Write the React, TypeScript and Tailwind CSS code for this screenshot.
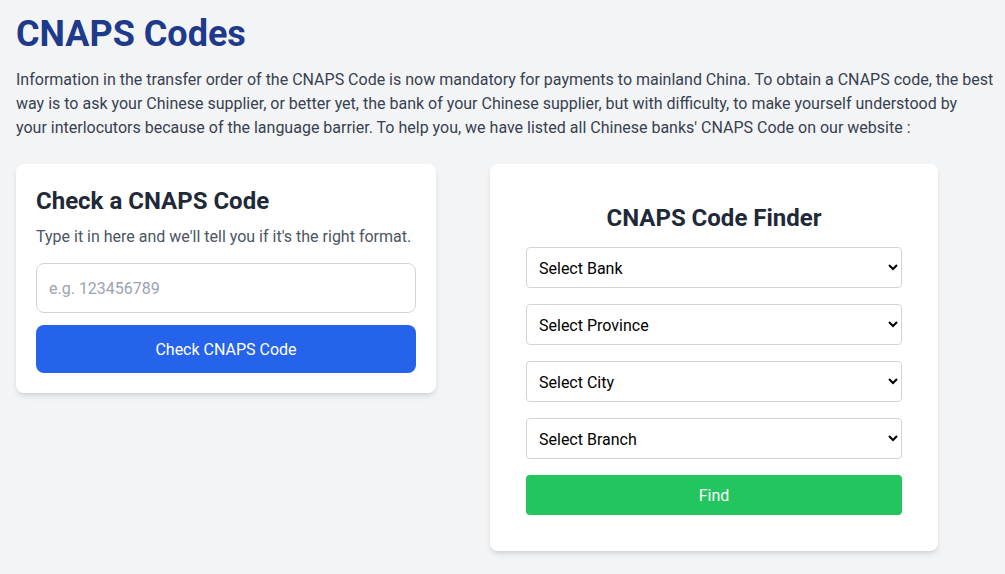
export default function App() {
  return (
    <div className="min-h-screen bg-[#f3f4f6] pl-4 pr-1 pt-[14px] pb-6 text-[#374151]" style={{ fontFamily: "Roboto, 'Noto Sans', sans-serif" }}>
      <h1 className="text-4xl font-bold text-[#1e3a8a]">CNAPS Codes</h1>
      <p className="mt-[14px] text-base leading-6 text-[#374151]">
        Information in the transfer order of the CNAPS Code is now mandatory for payments to mainland China. To obtain a CNAPS code, the best
        <br />
        way is to ask your Chinese supplier, or better yet, the bank of your Chinese supplier, but with difficulty, to make yourself understood by
        <br />
        your interlocutors because of the language barrier. To help you, we have listed all Chinese banks' CNAPS Code on our website :
      </p>

      <div className="mt-6 flex items-start gap-[54px]">
        {/* Check card */}
        <div className="w-[420px] rounded-lg bg-white px-5 pt-[21px] pb-5 shadow-md">
          <h2 className="text-2xl font-bold text-[#1f2937]">Check a CNAPS Code</h2>
          <p className="mt-2 text-[#4b5563]">Type it in here and we'll tell you if it's the right format.</p>
          <input
            type="text"
            placeholder="e.g. 123456789"
            className="mt-[14px] block w-full rounded-lg border border-[#d1d5db] px-3 pt-[13px] pb-[11px] leading-6 text-[#1f2937] placeholder:text-[#9ca3af]"
          />
          <button className="mt-3 block w-full rounded-lg bg-[#2563eb] pt-[13px] pb-[11px] leading-6 text-white">Check CNAPS Code</button>
        </div>

        {/* Finder card */}
        <div className="w-[448px] rounded-lg bg-white px-9 pt-[38px] pb-9 shadow-md">
          <h2 className="mb-[13px] text-center text-2xl font-bold text-[#1f2937]">CNAPS Code Finder</h2>
          <div className="flex flex-col gap-4">
            <select className="h-[41px] w-full rounded border border-[#d1d5db] bg-white pl-2 pr-3 pt-px text-black">
              <option>Select Bank</option>
            </select>
            <select className="h-[41px] w-full rounded border border-[#d1d5db] bg-white pl-2 pr-3 pt-px text-black">
              <option>Select Province</option>
            </select>
            <select className="h-[41px] w-full rounded border border-[#d1d5db] bg-white pl-2 pr-3 pt-px text-black">
              <option>Select City</option>
            </select>
            <select className="h-[41px] w-full rounded border border-[#d1d5db] bg-white pl-2 pr-3 pt-px text-black">
              <option>Select Branch</option>
            </select>
            <button className="h-10 w-full rounded bg-[#22c55e] pt-px text-white">Find</button>
          </div>
        </div>
      </div>
    </div>
  );
}
